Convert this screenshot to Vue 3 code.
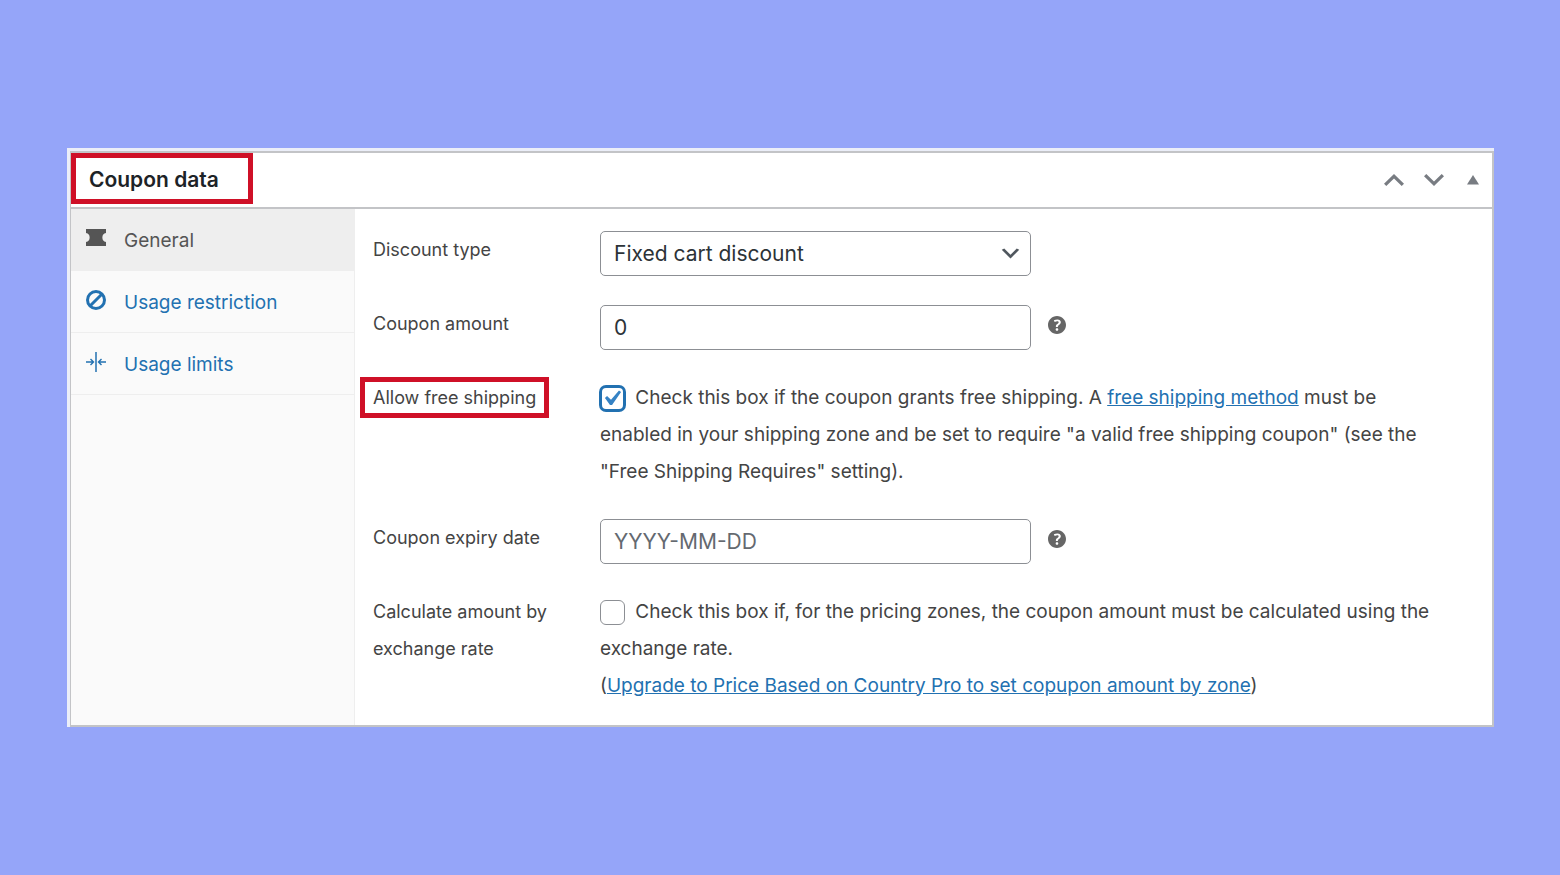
<template>
  <main class="page">
    <section class="postbox">
      <header class="postbox-header">
        <h2>Coupon data</h2>
        <div class="handle-actions">
          <button type="button" aria-label="Move up">
            <svg width="20" height="12" viewBox="0 0 20 12">
              <path d="M10 0l10 9.8-2.3 2.2L10 4.6 2.3 12 0 9.8z" />
            </svg>
          </button>
          <button type="button" aria-label="Move down">
            <svg width="20" height="12" viewBox="0 0 20 12">
              <path d="M10 12L0 2.2 2.3 0 10 7.4 17.7 0 20 2.2z" />
            </svg>
          </button>
          <button
            type="button"
            aria-label="Toggle panel"
            :aria-expanded="isOpen"
            @click="isOpen = !isOpen"
          >
            <svg width="12" height="10" viewBox="0 0 12 10">
              <path d="M6 0l6 9.4H0z" />
            </svg>
          </button>
        </div>
      </header>

      <div v-if="isOpen" class="panel-wrap">
        <nav class="tabs">
          <a
            v-for="tab in tabs"
            :key="tab.id"
            href="#"
            :class="{ active: tab.id === activeTab }"
            @click.prevent="activeTab = tab.id"
          >
            <svg width="20" height="20" viewBox="0 0 20 20">
              <path
                v-if="tab.id === 'general'"
                d="M0 1h20v4a4.600 4.600 0 0 0 0 9v4H0v-4a4.600 4.600 0 0 0 0-9z"
              />
              <g v-else-if="tab.id === 'restriction'" class="stroked">
                <circle cx="10" cy="10" r="8.500" stroke-width="3" />
                <path d="M4.500 15.500l11-11" stroke-width="3" />
              </g>
              <g v-else class="stroked">
                <path d="M10 0v20" stroke-width="1.500" />
                <path
                  d="M0 10h7M4.500 7l3 3-3 3M20 10h-7M15.500 7l-3 3 3 3"
                  stroke-width="1.400"
                />
              </g>
            </svg>
            <span>{{ tab.label }}</span>
          </a>
        </nav>

        <form class="options" @submit.prevent>
          <div class="form-field">
            <label for="discount-type">Discount type</label>
            <div class="control">
              <div class="select-wrap">
                <select id="discount-type" v-model="coupon.type">
                  <option value="percent">Percentage discount</option>
                  <option value="fixed_cart">Fixed cart discount</option>
                  <option value="fixed_product">Fixed product discount</option>
                </select>
                <svg width="25" height="25" viewBox="0 0 20 20">
                  <path d="M5 6l5 5 5-5 2 1-7 7-7-7 2-1z" />
                </svg>
              </div>
            </div>
          </div>

          <div class="form-field">
            <label for="coupon-amount">Coupon amount</label>
            <div class="control">
              <input id="coupon-amount" v-model="coupon.amount" type="text" />
              <svg class="help" width="18" height="18" viewBox="3 3 14 14">
                <path :d="helpIcon" />
              </svg>
            </div>
          </div>

          <div class="form-field">
            <label for="free-shipping">
              <span class="marked">Allow free shipping</span>
            </label>
            <p class="description">
              <span class="checkbox focused">
                <input
                  id="free-shipping"
                  v-model="coupon.freeShipping"
                  type="checkbox"
                />
                <svg
                  v-if="coupon.freeShipping"
                  width="31"
                  height="31"
                  viewBox="0 0 20 20"
                >
                  <path :d="checkIcon" />
                </svg>
              </span>
              Check this box if the coupon grants free shipping. A
              <a href="#">free shipping method</a> must be enabled in your
              shipping zone and be set to require "a valid free shipping coupon"
              (see the "Free Shipping Requires" setting).
            </p>
          </div>

          <div class="form-field">
            <label for="expiry-date">Coupon expiry date</label>
            <div class="control">
              <input
                id="expiry-date"
                v-model="coupon.expiry"
                type="text"
                placeholder="YYYY-MM-DD"
              />
              <svg class="help" width="18" height="18" viewBox="3 3 14 14">
                <path :d="helpIcon" />
              </svg>
            </div>
          </div>

          <div class="form-field">
            <label for="exchange-rate">Calculate amount by exchange rate</label>
            <p class="description">
              <span class="checkbox">
                <input
                  id="exchange-rate"
                  v-model="coupon.exchangeRate"
                  type="checkbox"
                />
                <svg
                  v-if="coupon.exchangeRate"
                  width="31"
                  height="31"
                  viewBox="0 0 20 20"
                >
                  <path :d="checkIcon" />
                </svg>
              </span>
              Check this box if, for the pricing zones, the coupon amount must
              be calculated using the exchange rate.<br />
              (<a href="#"
                >Upgrade to Price Based on Country Pro to set copupon amount by
                zone</a
              >)
            </p>
          </div>
        </form>
      </div>
    </section>
  </main>
</template>

<script setup>
import { reactive, ref } from "vue";

const tabs = [
  { id: "general", label: "General" },
  { id: "restriction", label: "Usage restriction" },
  { id: "limits", label: "Usage limits" },
];

const activeTab = ref("general");
const isOpen = ref(true);

const coupon = reactive({
  type: "fixed_cart",
  amount: "0",
  freeShipping: true,
  expiry: "",
  exchangeRate: false,
});

const checkIcon =
  "M14.83 4.89l1.34.94-5.81 8.38H9.02L5.78 9.67l1.34-1.25 2.57 2.4z";

const helpIcon =
  "M17 10c0-3.87-3.14-7-7-7-3.87 0-7 3.13-7 7s3.13 7 7 7c3.86 0 7-3.13 7-7zm-6.3 1.48H9.14v-.43c0-.38.08-.7.24-.98s.46-.57.88-.89c.41-.29.68-.53.81-.71.14-.18.2-.39.2-.62 0-.25-.09-.44-.28-.58-.19-.13-.45-.19-.79-.19-.58 0-1.25.19-2 .57l-.64-1.28c.87-.49 1.8-.74 2.77-.74.81 0 1.45.2 1.92.58.48.39.71.91.71 1.55 0 .43-.09.8-.29 1.11-.19.32-.57.67-1.11 1.06-.38.28-.61.49-.71.63-.1.15-.15.34-.15.57v.35zm-1.47 2.74c-.18-.17-.27-.42-.27-.73 0-.33.08-.58.26-.75s.43-.25.77-.25c.32 0 .57.09.75.26s.27.42.27.74c0 .3-.09.55-.27.72-.18.18-.43.27-.75.27-.33 0-.58-.09-.76-.26z";
</script>

<style>
body {
  margin: 0;
  background: #95a5f9;
}
</style>

<style scoped>
* {
  box-sizing: border-box;
}

.page {
  display: flex;
  align-items: center;
  min-height: 100vh;
  padding: 40px 66px;
  font-family: Inter, "Liberation Sans", sans-serif;
  font-size: 19px;
  color: #444;
}

.postbox {
  flex: 1;
  margin: 3px 0 1px 4px;
  border: 1px solid #c3c4c7;
  border-width: 2px 2px 2px 1px;
  background: #fff;
  box-shadow: -3px 0 0 #ebeef8, 0 -3px 0 #ebeef8, -3px -3px 0 #ebeef8;
}

.postbox-header {
  display: flex;
  align-items: center;
  justify-content: space-between;
  height: 56px;
  padding-right: 13px;
  border-bottom: 2px solid #c3c4c7;
}

h2 {
  margin: 0 0 2px;
  width: 182px;
  padding: 2px 13px 0;
  border: 5px solid #cf1027;
  font-size: 21px;
  font-weight: 600;
  line-height: 39px;
  color: #1d2327;
}

.handle-actions {
  display: flex;
  align-items: center;
  gap: 20px;
}

.handle-actions button {
  display: flex;
  padding: 0;
  border: none;
  background: none;
  cursor: pointer;
}

.handle-actions button:last-child {
  margin-left: 3px;
}

.handle-actions svg {
  fill: #787c82;
}

.panel-wrap {
  display: flex;
}

.tabs {
  flex: none;
  width: 284px;
  border-right: 1px solid #eee;
  background: #fafafa;
}

.tabs a {
  display: flex;
  align-items: center;
  gap: 18px;
  height: 62px;
  padding: 2px 15px 0;
  border-bottom: 1px solid #eee;
  color: #2271b1;
  text-decoration: none;
}

.tabs a.active {
  background: #eee;
  color: #555;
}

.tabs svg {
  fill: currentColor;
  margin-bottom: 4px;
}

.tabs .stroked {
  fill: none;
  stroke: currentColor;
}

.options {
  flex: 1;
  display: flex;
  flex-direction: column;
  gap: 29px;
  padding: 22px 50px 21px 18px;
}

.form-field {
  display: flex;
  line-height: 37px;
}

.form-field > label {
  flex: none;
  width: 227px;
  padding-right: 24px;
  font-size: 18px;
}

.marked {
  display: inline-block;
  margin: -2px -13px;
  padding: 0 8px;
  border: 5px solid #cf1027;
  line-height: 31px;
}

.control {
  flex: 1;
  display: flex;
  gap: 17px;
}

.select-wrap {
  position: relative;
  width: 431px;
}

.select-wrap svg {
  position: absolute;
  top: 10px;
  right: 8px;
  fill: #50575e;
  pointer-events: none;
}

select,
input[type="text"] {
  width: 431px;
  height: 45px;
  margin: 0;
  padding: 0 13px;
  border: 1px solid #8c8f94;
  border-radius: 5px;
  background: #fff;
  font-family: inherit;
  font-size: 21px;
  color: #2c3338;
}

select {
  appearance: none;
}

input::placeholder {
  color: #646970;
  opacity: 1;
}

.help {
  margin-top: 11px;
  fill: #666;
}

.description {
  flex: 1;
  margin: 0;
}

.description a {
  color: #2271b1;
}

.checkbox {
  display: inline-grid;
  grid-template: 25px / 25px;
  margin-right: 5px;
  vertical-align: middle;
}

.checkbox > * {
  grid-area: 1 / 1;
}

.checkbox input {
  appearance: none;
  width: 25px;
  height: 25px;
  margin: 0;
  border: 1px solid #8c8f94;
  border-radius: 6px;
  background: #fff;
}

.checkbox.focused input {
  border: 2px solid #2271b1;
  box-shadow: 0 0 0 1px #2271b1;
}

/* the tick is drawn larger than its box */
.checkbox svg {
  margin: -3px -4px;
  fill: #3582c4;
  pointer-events: none;
}
</style>
